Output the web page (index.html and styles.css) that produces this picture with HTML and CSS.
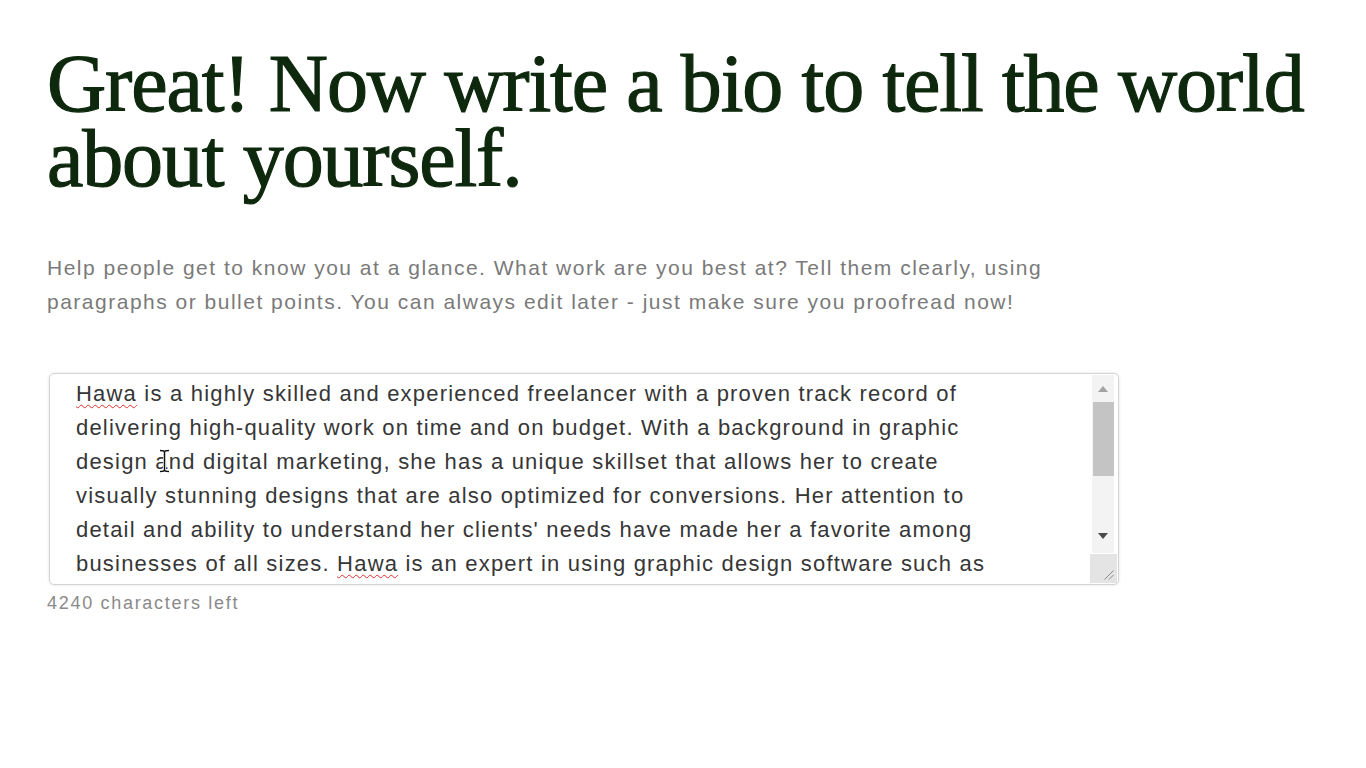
FILE: index.html
```html
<!DOCTYPE html>
<html lang="en">
<head>
<meta charset="utf-8">
<title>Write a bio</title>
<link rel="stylesheet" href="styles.css">
</head>
<body>
<main class="page">
  <h1 class="title">Great! Now write a bio to tell the world about yourself.</h1>
  <p class="lead">Help people get to know you at a glance. What work are you best at? Tell them clearly, using paragraphs or bullet points. You can always edit later - just make sure you proofread now!</p>
  <div class="field">
    <div class="bio-box">
      <div class="bio-text"><span class="spell">Hawa</span> is a highly skilled and experienced freelancer with a proven track record of delivering high-quality work on time and on budget. With a background in graphic design and digital marketing, she has a unique skillset that allows her to create visually stunning designs that are also optimized for conversions. Her attention to detail and ability to understand her clients' needs have made her a favorite among businesses of all sizes. <span class="spell">Hawa</span> is an expert in using graphic design software such as Adobe Photoshop, Illustrator, and InDesign, and she is always up to date with the latest trends.</div>
      <div class="scrollbar">
        <span class="arrow up"></span>
        <span class="thumb"></span>
        <span class="arrow down"></span>
      </div>
      <div class="grip">
        <svg width="12" height="12" viewBox="0 0 12 12"><path d="M11.5 2.5 L2.5 11.5 M11.5 7 L7 11.5" stroke="#8a8a8a" stroke-width="1" fill="none"/></svg>
      </div>
      <svg class="ibeam" width="11" height="24" viewBox="0 0 11 24"><path d="M1 1.5 H4.5 M6.5 1.5 H10 M5.5 2 V22 M1 22.5 H4.5 M6.5 22.5 H10" stroke="#ffffff" stroke-width="3" fill="none"/><path d="M1 1.5 Q5.5 1.5 5.5 3 Q5.5 1.5 10 1.5 M5.5 3 V21 M1 22.5 Q5.5 22.5 5.5 21 Q5.5 22.5 10 22.5" stroke="#111111" stroke-width="1.5" fill="none"/></svg>
    </div>
    <div class="counter">4240 characters left</div>
  </div>
</main>
</body>
</html>
```
FILE: styles.css
```css
html, body {
  margin: 0;
  padding: 0;
  background: #ffffff;
}
.page {
  padding: 46px 0 0 47px;
}
.title {
  margin: 0;
  font-family: "Liberation Serif", "Times New Roman", serif;
  font-weight: 400;
  font-size: 82px;
  line-height: 75px;
  letter-spacing: -1.15px;
  color: #0e280d;
  width: 1300px;
  -webkit-text-stroke: 1.2px #0e280d;
}
.lead {
  margin: 55px 0 0 0;
  font-family: "Liberation Sans", Arial, sans-serif;
  font-size: 21px;
  line-height: 34px;
  letter-spacing: 1.5px;
  color: #7a7a7a;
  width: 1030px;
}
.field {
  margin-top: 54px;
}
.bio-box {
  position: relative;
  margin-left: 2px;
  width: 1068px;
  height: 210px;
  border: 1px solid #d4d4d4;
  border-radius: 5px;
  box-shadow: 0 0 3px rgba(0,0,0,0.12);
  overflow: hidden;
  box-sizing: content-box;
}
.bio-text {
  padding: 3px 0 0 26px;
  width: 925px;
  font-family: "Liberation Sans", Arial, sans-serif;
  font-size: 22px;
  line-height: 34px;
  letter-spacing: 1.2px;
  color: #363636;
}
.spell {
  text-decoration: underline wavy #e03030;
  text-decoration-thickness: 1px;
  text-underline-offset: 3px;
}
.scrollbar {
  position: absolute;
  top: 1px;
  right: 4px;
  width: 22px;
  height: 178px;
  background: #f3f3f3;
  display: flex;
  flex-direction: column;
  align-items: center;
}
.arrow {
  width: 0;
  height: 0;
  border-left: 5px solid transparent;
  border-right: 5px solid transparent;
}
.arrow.up {
  margin-top: 11px;
  border-bottom: 6px solid #a3a3a3;
}
.thumb {
  margin-top: 10px;
  width: 21px;
  height: 74px;
  background: #c4c4c4;
}
.arrow.down {
  margin-top: auto;
  margin-bottom: 14px;
  border-top: 6px solid #4a4a4a;
}
.grip {
  position: absolute;
  right: 1px;
  bottom: 1px;
  width: 27px;
  height: 29px;
  background: #e4e4e4;
  display: flex;
  align-items: flex-end;
  justify-content: flex-end;
  padding: 0 3px 3px 0;
  box-sizing: border-box;
}
.ibeam {
  position: absolute;
  left: 109px;
  top: 75px;
}
.counter {
  margin-top: 8px;
  font-family: "Liberation Sans", Arial, sans-serif;
  font-size: 18px;
  line-height: 20px;
  letter-spacing: 1.7px;
  color: #8a8a8a;
}
```
